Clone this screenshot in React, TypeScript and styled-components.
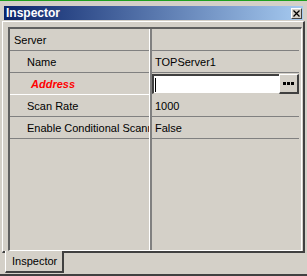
import React from "react";
import styled, { createGlobalStyle } from "styled-components";

const GlobalStyle = createGlobalStyle`
  html, body {
    margin: 0;
    padding: 0;
    background: #d4d0c8;
  }
  body {
    font-family: "Liberation Sans", Arial, sans-serif;
    font-size: 11px;
    color: #000;
  }
`;

const Window = styled.div`
  width: 307px;
  height: 276px;
  box-sizing: border-box;
  background: #d4d0c8;
  border-top: 1px solid #1ea01e;
  border-bottom: 2px solid #404040;
  padding: 5px 2px 1px 2px;
  display: flex;
  flex-direction: column;
  overflow: hidden;
`;

const Caption = styled.div`
  height: 14px;
  margin: 0 2px 1px 2px;
  display: flex;
  align-items: center;
  justify-content: space-between;
  padding: 0 1px 0 2px;
  background: linear-gradient(to right, #0a246a, #a6caf0);
  color: #fff;
  font-weight: bold;
  font-size: 12px;
`;

const CloseButton = styled.div`
  width: 11px;
  height: 11px;
  box-sizing: border-box;
  background: #d4d0c8;
  border-top: 1px solid #fff;
  border-left: 1px solid #fff;
  border-right: 1px solid #404040;
  border-bottom: 1px solid #404040;
  display: flex;
  align-items: center;
  justify-content: center;
`;

const TabPage = styled.div`
  flex: 1;
  display: flex;
  box-sizing: border-box;
  border-top: 1px solid #fff;
  border-left: 1px solid #fff;
  border-right: 2px solid #404040;
  border-bottom: 2px solid #404040;
  padding: 5px 1px 0 5px;
`;

const Grid = styled.div`
  flex: 1;
  display: grid;
  grid-template-columns: 139px 1fr;
  grid-auto-rows: 22px;
  align-content: start;
  box-sizing: border-box;
  border-top: 2px solid #606060;
  border-left: 2px solid #606060;
  border-right: 1px solid #fff;
  border-bottom: 1px solid #fff;
  position: relative;
`;

const Divider = styled.div`
  position: absolute;
  top: 0;
  bottom: 0;
  left: 139px;
  width: 1px;
  background: #fff;
  border-right: 2px solid #808080;
`;

const NameCell = styled.div<{ $indent: number; $lineColor?: string }>`
  display: flex;
  align-items: center;
  padding-left: ${({ $indent }) => $indent}px;
  border-bottom: 1px solid ${({ $lineColor }) => $lineColor ?? "#808080"};
  white-space: nowrap;
  overflow: hidden;
`;

const ValueCell = styled.div`
  display: flex;
  align-items: center;
  padding-left: 3px;
  margin-left: 3px;
  margin-right: 2px;
  border-bottom: 1px solid #808080;
  white-space: nowrap;
  overflow: hidden;
`;

const RequiredLabel = styled.span`
  color: #ff0000;
  font-weight: bold;
  font-style: italic;
`;

const EditCell = styled.div`
  display: flex;
  align-items: stretch;
  margin-left: 3px;
  padding: 1px 0;
  margin-right: 2px;
`;

const TextBox = styled.div`
  flex: 1;
  background: #fff;
  border-top: 2px solid #404040;
  border-left: 2px solid #404040;
  border-bottom: 1px solid #d4d0c8;
  display: flex;
  align-items: center;
  padding-left: 1px;
`;

const Caret = styled.div`
  width: 1px;
  height: 14px;
  background: #000;
`;

const EllipsisButton = styled.div`
  width: 20px;
  box-sizing: border-box;
  background: #d4d0c8;
  border-top: 1px solid #fff;
  border-left: 1px solid #fff;
  border-right: 2px solid #404040;
  border-bottom: 2px solid #404040;
  display: flex;
  align-items: center;
  justify-content: center;
  gap: 1px;
`;

const Dot = styled.span`
  width: 3px;
  height: 3px;
  background: #000;
`;

const TabStrip = styled.div`
  height: 20px;
  display: flex;
  padding-left: 3px;
`;

const Tab = styled.div`
  width: 59px;
  box-sizing: border-box;
  margin-top: -2px;
  background: #d4d0c8;
  border-left: 1px solid #fff;
  border-right: 2px solid #404040;
  border-bottom: 2px solid #404040;
  display: flex;
  align-items: center;
  padding-left: 6px;
`;

const rows = [
  { name: "Server", value: "", indent: 4 },
  { name: "Name", value: "TOPServer1", indent: 17 },
  { name: "Address", value: "", indent: 21, edit: true, required: true },
  { name: "Scan Rate", value: "1000", indent: 17 },
  { name: "Enable Conditional Scanning", value: "False", indent: 17 },
];

export default function App() {
  return (
    <>
      <GlobalStyle />
      <Window>
        <Caption>
          <span>Inspector</span>
          <CloseButton>
            <svg width="7" height="7" viewBox="0 0 7 7">
              <path d="M0.5 0.5L6.5 6.5M6.5 0.5L0.5 6.5" stroke="#000" strokeWidth="1.3" />
            </svg>
          </CloseButton>
        </Caption>
        <TabPage>
          <Grid>
            {rows.map((r) => (
              <React.Fragment key={r.name}>
                <NameCell $indent={r.indent} $lineColor={r.edit ? "#fff" : undefined}>
                  {r.required ? <RequiredLabel>{r.name}</RequiredLabel> : r.name}
                </NameCell>
                {r.edit ? (
                  <EditCell>
                    <TextBox>
                      <Caret />
                    </TextBox>
                    <EllipsisButton>
                      <Dot />
                      <Dot />
                      <Dot />
                    </EllipsisButton>
                  </EditCell>
                ) : (
                  <ValueCell>{r.value}</ValueCell>
                )}
              </React.Fragment>
            ))}
            <Divider />
          </Grid>
        </TabPage>
        <TabStrip>
          <Tab>Inspector</Tab>
        </TabStrip>
      </Window>
    </>
  );
}
